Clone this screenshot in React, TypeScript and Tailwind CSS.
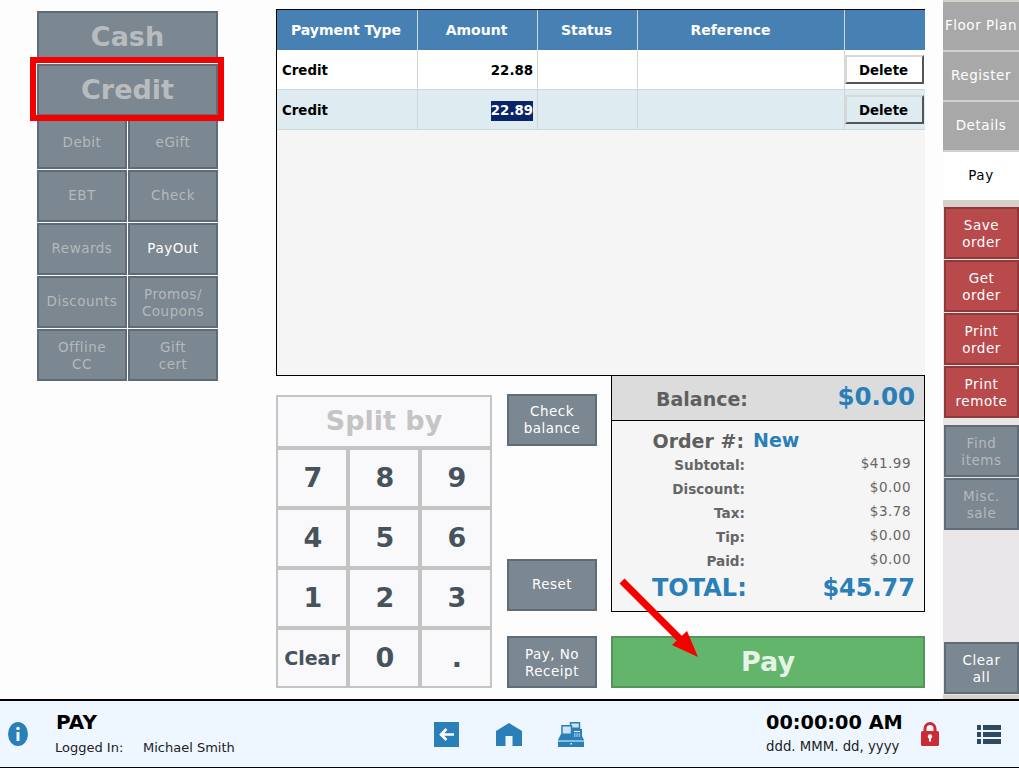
const Btn = ({ label, className = "", plain = false }: { label: string; className?: string; plain?: boolean }) => {
    const shift = plain ? "" : label.includes("\n") ? "pt-[2px]" : "pb-[2px]"
    return (
        <div className={`flex items-center justify-center text-center whitespace-pre-line border-[2px] border-[#5f6c75] bg-[#7b8791] leading-[17px] ${shift} ${className}`}>
            {label}
        </div>
    )
}

const smallButtons = [
    "Debit", "eGift",
    "EBT", "Check",
    "Rewards", "PayOut",
    "Discounts", "Promos/\nCoupons",
    "Offline\nCC", "Gift\ncert",
]

const keys = ["7", "8", "9", "4", "5", "6", "1", "2", "3", "Clear", "0", "."]

const totals = [
    ["Subtotal:", "$41.99"],
    ["Discount:", "$0.00"],
    ["Tax:", "$3.78"],
    ["Tip:", "$0.00"],
    ["Paid:", "$0.00"],
]

const rows = [
    { bg: "bg-white", amount: "22.88", selected: false },
    { bg: "bg-[#deebf1]", amount: "22.89", selected: true },
]

const redButtons = ["Save\norder", "Get\norder", "Print\norder", "Print\nremote"]

export default function App() {
    return (
        <div className="relative w-[1019px] h-[768px] overflow-hidden bg-[#fdfdfd] font-['DejaVu_Sans',sans-serif]">
            <div className="flex h-[699px]">
                {/* left tender buttons */}
                <div className="w-[276px] pl-[37px] pt-[11px] shrink-0">
                    <div className="w-[181px] flex flex-col gap-[3px]">
                        <Btn label="Cash" plain className="h-[50px] text-[27px] font-bold text-[#b9bcbe]" />
                        <Btn label="Credit" className="h-[52px] text-[27px] font-bold text-[#b9bcbe]" />
                    </div>
                    <div className="w-[181px] mt-[1px] grid grid-cols-2 gap-[1px]">
                        {smallButtons.map((label) => (
                            <Btn
                                key={label}
                                label={label}
                                className={`h-[52px] text-[13.5px] tracking-[0.5px] ${label === "PayOut" ? "text-white" : "text-[#b5b9bc]"}`}
                            />
                        ))}
                    </div>
                </div>

                {/* center */}
                <div className="w-[649px] pt-[9px] shrink-0">
                    <div className="h-[367px] border-l border-t border-b border-black bg-[#f5f5f5]">
                        <div className="flex h-[40px] bg-[#4781b4] text-white font-bold text-[14px]">
                            <div className="w-[141px] flex items-center justify-center pr-[2px] border-r border-[#cfd6dc]">Payment Type</div>
                            <div className="w-[120px] flex items-center justify-center pr-[2px] border-r border-[#cfd6dc]">Amount</div>
                            <div className="w-[100px] flex items-center justify-center pr-[2px] border-r border-[#cfd6dc]">Status</div>
                            <div className="w-[207px] flex items-center justify-center pr-[21px] border-r border-[#cfd6dc]">Reference</div>
                            <div className="flex-1" />
                        </div>
                        {rows.map((row) => (
                            <div key={row.amount} className={`flex h-[40px] text-[13.33px] font-bold text-black border-b border-[#cfd6dc] ${row.bg}`}>
                                <div className="w-[141px] flex items-center pl-[5px] pt-[3px] border-r border-[#cfd6dc]">Credit</div>
                                <div className="w-[120px] flex items-center justify-end pr-[4px] pt-[3px] border-r border-[#cfd6dc]">
                                    <span className={row.selected ? "bg-[#0a246a] text-white" : ""}>{row.amount}</span>
                                </div>
                                <div className="w-[100px] border-r border-[#cfd6dc]" />
                                <div className="w-[207px] border-r border-[#cfd6dc]" />
                                <div className="flex-1 flex items-start pt-[5px]">
                                    <div className={`w-[79px] h-[29px] flex items-center justify-center pt-[3px] pr-[2px] border-2 border-t-[#d8d8d8] border-l-[#d8d8d8] border-r-[#555] border-b-[#555] ${row.bg}`}>
                                        Delete
                                    </div>
                                </div>
                            </div>
                        ))}
                    </div>

                    <div className="flex -mt-px">
                        {/* keypad */}
                        <div className="w-[216px] mt-[20px] shrink-0">
                            <div className="h-[53px] flex items-center justify-center border-2 border-[#c4c4c4] bg-[#f9f9fb] text-[#c4c4c4] font-bold text-[27px]">
                                Split by
                            </div>
                            <div className="grid grid-cols-3">
                                {keys.map((key) => (
                                    <div
                                        key={key}
                                        className={`h-[60px] flex items-center justify-center border-2 border-[#c4c4c4] bg-[#f9f9fb] text-[#47535c] font-bold ${key === "Clear" ? "text-[19px]" : "text-[27px] pl-[2px]"}`}
                                    >
                                        {key}
                                    </div>
                                ))}
                            </div>
                        </div>

                        {/* actions */}
                        <div className="w-[90px] ml-[15px] mt-[19px] flex flex-col text-[13.5px] tracking-[0.5px] text-white shrink-0">
                            <Btn label={"Check\nbalance"} plain className="h-[52px]" />
                            <Btn label="Reset" className="h-[52px] mt-[113px]" />
                            <Btn label={"Pay, No\nReceipt"} className="h-[52px] mt-[25px]" />
                        </div>

                        {/* balance */}
                        <div className="w-[314px] ml-[14px] shrink-0">
                            <div className="h-[237px] border border-black bg-[#f5f5f5]">
                                <div className="h-[45px] flex items-center justify-between bg-[#dcdcdc] border-b border-black pl-[44px] pr-[9px]">
                                    <span className="font-bold text-[19px] text-[#5f5f5f] pt-[2px]">Balance:</span>
                                    <span className="font-bold text-[24.5px] text-[#2a7fb8] pb-[1px]">$0.00</span>
                                </div>
                                <div className="flex items-baseline pt-[6px] pr-[9px]">
                                    <span className="w-[132px] text-right font-bold text-[19px] text-[#5f5f5f]">Order #:</span>
                                    <span className="ml-[9px] font-bold text-[19px] text-[#2a7fb8] -translate-y-px">New</span>
                                </div>
                                <div className="-mt-[2px]">
                                    {totals.map(([name, value]) => (
                                        <div key={name} className="h-[24px] flex items-center justify-between pr-[13px]">
                                            <span className="w-[133px] text-right font-bold text-[13.6px] text-[#666]">{name}</span>
                                            <span className="text-[13.5px] tracking-[0.5px] text-[#666] pb-[4px]">{value}</span>
                                        </div>
                                    ))}
                                </div>
                                <div className="flex items-center justify-between pl-[40px] pr-[9px] h-[28px]">
                                    <span className="font-bold text-[24px] text-[#2a7fb8]">TOTAL:</span>
                                    <span className="font-bold text-[24px] text-[#2a7fb8]">$45.77</span>
                                </div>
                            </div>
                            <div className="mt-[24px] h-[52px] flex items-center justify-center border-2 border-[#56945a] bg-[#62b56a] text-[#e6f3e7] font-bold text-[27px]">
                                Pay
                            </div>
                        </div>
                    </div>
                </div>

                {/* right tabs */}
                <div className="ml-[18px] w-[76px] shrink-0 bg-[#e8e6e8] flex flex-col text-[13.5px] tracking-[0.55px] text-white">
                    <div className="bg-[#d5d0c9] pt-[2px] flex flex-col gap-[2px]">
                        {["Floor Plan", "Register", "Details"].map((label) => (
                            <div key={label} className="h-[48px] pb-[2px] bg-[#a8a8a8] flex items-center justify-center whitespace-nowrap">
                                {label}
                            </div>
                        ))}
                        <div className="h-[48px] pb-[2px] bg-white text-black flex items-center justify-center">Pay</div>
                        <div className="h-[5px]" />
                    </div>
                    <div className="flex flex-col gap-[1px] pl-[1px]">
                        {redButtons.map((label) => (
                            <div key={label} className="h-[52px] pt-[1px] flex items-center justify-center text-center whitespace-pre-line leading-[17px] border-2 border-[#8f3a3a] bg-[#b84a4c]">
                                {label}
                            </div>
                        ))}
                    </div>
                    <div className="flex flex-col gap-[1px] pl-[1px] mt-[7px] text-[#b5b9bc]">
                        <Btn label={"Find\nitems"} className="h-[52px]" />
                        <Btn label={"Misc.\nsale"} className="h-[52px]" />
                    </div>
                    <div className="mt-[112px] pl-[1px]">
                        <Btn label={"Clear\nall"} className="h-[52px] text-white" />
                    </div>
                    <div className="mt-auto h-[4px] bg-[#d5d0c9]" />
                </div>
            </div>

            {/* footer */}
            <div className="h-[69px] flex items-center bg-[#eef7ff] border-t-2 border-b border-black">
                <svg width="20" height="24" viewBox="0 0 20 24" className="ml-[8px]">
                    <ellipse cx="10" cy="12" rx="10" ry="12" fill="#2a7fb8" />
                    <rect x="8.5" y="10" width="3" height="9" fill="#eef7ff" />
                    <circle cx="10" cy="6.5" r="1.8" fill="#eef7ff" />
                </svg>
                <div className="ml-[27px] w-[379px]">
                    <div className="pl-[1px] font-bold text-[20px] leading-[24px] text-black">PAY</div>
                    <div className="flex mt-[4px] text-[13px] text-[#222]">
                        <span className="w-[88px]">Logged In:</span>
                        <span>Michael Smith</span>
                    </div>
                </div>
                <div className="flex items-center">
                    <svg width="25" height="25" viewBox="0 0 25 25">
                        <rect width="25" height="25" fill="#2a7fb8" />
                        <path d="M7 12.5h13M12.5 7l-5.5 5.5 5.5 5.5" fill="none" stroke="#fff" strokeWidth="2.6" />
                    </svg>
                    <svg width="26" height="23" viewBox="0 0 26 23" className="ml-[37px]">
                        <path d="M13 0L26 8v15H16.5V13h-7v10H0V8z" fill="#2a7fb8" />
                    </svg>
                    <svg width="26" height="25" viewBox="0 0 26 25" className="ml-[36px]">
                        <path d="M3 12h20l3 6v7H0v-7z" fill="#2a7fb8" />
                        <path d="M0 19h26" stroke="#eef7ff" strokeWidth="1" />
                        <rect x="12.5" y="0.75" width="9" height="5.5" fill="#cfe3f2" stroke="#2a7fb8" strokeWidth="1.5" />
                        <rect x="4" y="3.75" width="9.5" height="8.5" fill="#cfe3f2" stroke="#2a7fb8" strokeWidth="1.5" />
                        <rect x="14" y="7" width="10" height="9" fill="#2a7fb8" />
                        <path d="M16 9h6v1h-6zM16 11.5h1.5v1H16zM18.3 11.5h1.5v1h-1.5zM20.6 11.5h1.5v1h-1.5zM16 13.5h1.5v1H16zM18.3 13.5h1.5v1h-1.5zM20.6 13.5h1.5v1h-1.5z" fill="#eef7ff" />
                        <rect x="12.5" y="21" width="1.5" height="1.5" fill="#eef7ff" />
                    </svg>
                </div>
                <div className="ml-auto w-[155px]">
                    <div className="font-bold text-[19.3px] leading-[22px] text-black whitespace-nowrap">00:00:00 AM</div>
                    <div className="mt-[3px] text-[13.3px] text-[#222] whitespace-nowrap">ddd. MMM. dd, yyyy</div>
                </div>
                <svg width="18" height="24" viewBox="0 0 18 24">
                    <path d="M4 10V6.5a5 5 0 0 1 10 0V10" fill="none" stroke="#cc2b33" strokeWidth="3" />
                    <rect y="9" width="18" height="15" rx="1.5" fill="#cc2b33" />
                    <circle cx="9" cy="14.5" r="2.2" fill="#fff" />
                    <rect x="8" y="14.5" width="2" height="5" fill="#fff" />
                </svg>
                <svg width="24" height="19" viewBox="0 0 24 19" className="ml-[38px] mr-[18px]">
                    <path d="M0 0h4v5H0zM6 0h18v5H6zM0 7h4v5H0zM6 7h18v5H6zM0 14h4v5H0zM6 14h18v5H6z" fill="#2d4a62" />
                </svg>
            </div>

            {/* red annotation */}
            <div className="absolute left-[30px] top-[57px] w-[194px] h-[64px] border-[6px] border-[#f50000]" />
            <svg className="absolute left-[600px] top-[560px]" width="120" height="110" viewBox="0 0 120 110">
                <path d="M22 21L85 84" stroke="#f50000" strokeWidth="7" />
                <path d="M98 97L72 85L87 71z" fill="#f50000" />
            </svg>
        </div>
    )
}
